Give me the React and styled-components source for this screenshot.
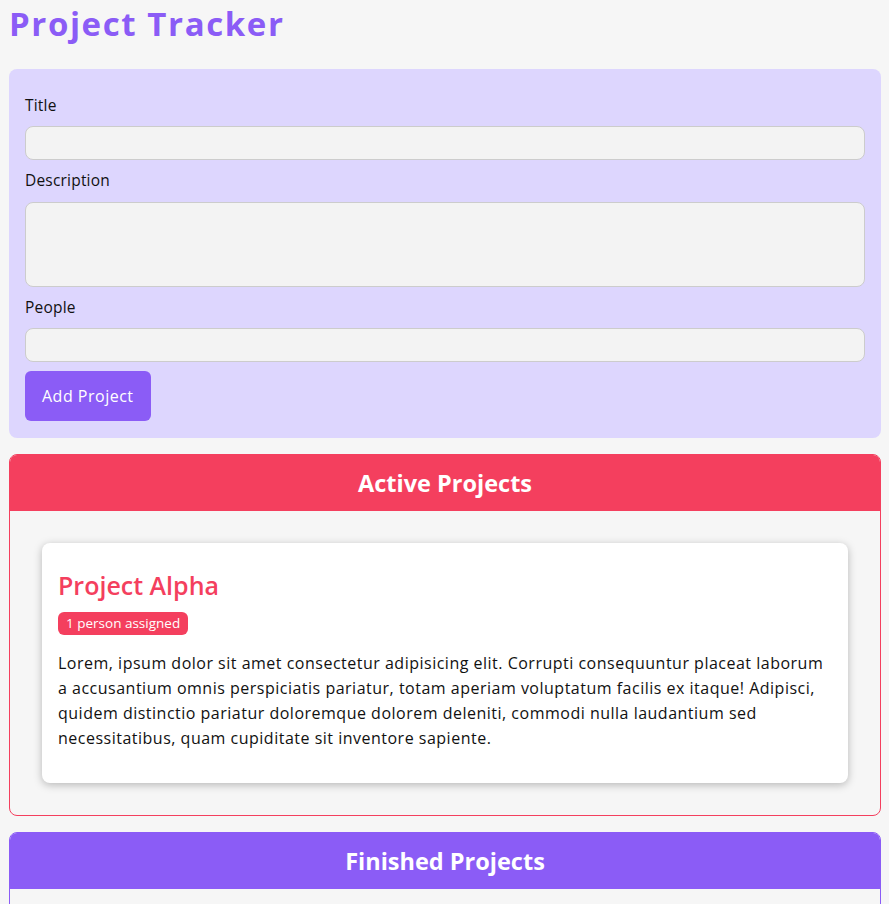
import React from "react";
import styled, { createGlobalStyle } from "styled-components";

const FONT = `"Open Sans", "Noto Sans", sans-serif`;

const colors = {
  bg: "#f6f6f6",
  violet: "#8b5cf6",
  violetLight: "#ddd6fe",
  rose: "#f43f5e",
};

const GlobalStyle = createGlobalStyle`
  * { box-sizing: border-box; }
  html, body { background: ${colors.bg}; }
  body {
    margin: 8px;
    font-family: ${FONT};
    color: #111;
  }
`;

const PageTitle = styled.h1`
  margin: 0 0 29px 1px;
  font-family: ${FONT};
  font-size: 33px;
  line-height: 32px;
  font-weight: 700;
  letter-spacing: 1.6px;
  color: ${colors.violet};
`;

const Form = styled.form`
  margin: 0 0 0 1px;
  padding: 16px 16px 17px;
  background: ${colors.violetLight};
  border-radius: 8px;
`;

const Control = styled.div`
  margin: 8px 0;
`;

const Label = styled.label`
  display: block;
  font-size: 15.5px;
  line-height: 25px;
  font-weight: 500;
  margin-bottom: 8px;
  letter-spacing: 0.2px;
`;

const fieldBase = `
  display: block;
  width: 100%;
  border: 1px solid #ccc;
  border-radius: 8px;
  background: #f3f3f3;
  font: inherit;
`;

const Input = styled.input`
  ${fieldBase}
  height: 34px;
`;

const TextArea = styled.textarea`
  ${fieldBase}
  height: 85px;
  margin-top: 9px;
  resize: none;
`;

const Button = styled.button`
  display: block;
  height: 50px;
  margin-top: 9px;
  padding: 0 17px;
  border: none;
  border-radius: 6px;
  background: ${colors.violet};
  color: #fff;
  font-family: ${FONT};
  font-size: 16px;
  letter-spacing: 0.5px;
  cursor: pointer;
`;

const Section = styled.section`
  margin: 16px 0 0 1px;
  border: 1px solid ${(p) => p.$color};
  border-radius: 8px;
  overflow: hidden;
`;

const SectionHeader = styled.header`
  height: 56px;
  display: flex;
  align-items: center;
  justify-content: center;
  background: ${(p) => p.$color};
`;

const SectionTitle = styled.h2`
  margin: 0;
  color: #fff;
  font-size: 23.5px;
  font-weight: 700;
`;

const List = styled.ul`
  list-style: none;
  margin: 0;
  padding: 32px;
  min-height: ${(p) => p.$minHeight || 0}px;
`;

const Card = styled.li`
  background: #fff;
  border-radius: 8px;
  padding: 16px;
  box-shadow: 0 2px 8px rgba(0, 0, 0, 0.26);
`;

const CardTitle = styled.h2`
  margin: 8px 0;
  font-size: 25px;
  line-height: 36px;
  font-weight: 600;
  color: ${colors.rose};
`;

const Badge = styled.span`
  display: inline-block;
  padding: 0 8px;
  height: 23px;
  line-height: 23px;
  border-radius: 6px;
  background: ${colors.rose};
  color: #fff;
  font-size: 13.5px;
`;

const Text = styled.p`
  margin: 16px 0;
  font-size: 16px;
  line-height: 25px;
  letter-spacing: 0.5px;
  color: #111;
`;

export default function App() {
  return (
    <>
      <GlobalStyle />
      <PageTitle>Project Tracker</PageTitle>
      <Form onSubmit={(e) => e.preventDefault()}>
        <Control>
          <Label htmlFor="title">Title</Label>
          <Input id="title" type="text" />
        </Control>
        <Control>
          <Label htmlFor="description">Description</Label>
          <TextArea id="description" />
        </Control>
        <Control>
          <Label htmlFor="people">People</Label>
          <Input id="people" type="text" />
        </Control>
        <Button type="submit">Add Project</Button>
      </Form>
      <Section $color={colors.rose}>
        <SectionHeader $color={colors.rose}>
          <SectionTitle>Active Projects</SectionTitle>
        </SectionHeader>
        <List>
          <Card>
            <CardTitle>Project Alpha</CardTitle>
            <Badge>1 person assigned</Badge>
            <Text>
              Lorem, ipsum dolor sit amet consectetur adipisicing elit. Corrupti
              consequuntur placeat laborum a accusantium omnis perspiciatis
              pariatur, totam aperiam voluptatum facilis ex itaque! Adipisci,
              quidem distinctio pariatur doloremque dolorem deleniti, commodi
              nulla laudantium sed necessitatibus, quam cupiditate sit inventore
              sapiente.
            </Text>
          </Card>
        </List>
      </Section>
      <Section $color={colors.violet}>
        <SectionHeader $color={colors.violet}>
          <SectionTitle>Finished Projects</SectionTitle>
        </SectionHeader>
        <List $minHeight={120} />
      </Section>
    </>
  );
}
